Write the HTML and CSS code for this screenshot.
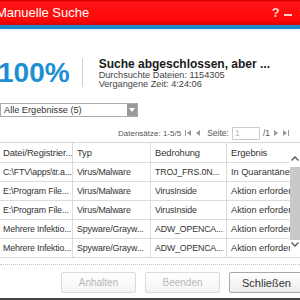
FILE: index.html
```html
<!DOCTYPE html>
<html lang="de">
<head>
    <meta charset="UTF-8">
    <title>Manuelle Suche</title>
    <link rel="stylesheet" href="styles.css">
</head>
<body>
    <div class="window">
        <div class="titlebar">
            <span class="title">Manuelle Suche</span>
            <span class="controls">
                <span class="help">?</span>
                <span class="minimize"></span>
                <span class="close">×</span>
            </span>
        </div>
        <div class="stripe"></div>

        <div class="summary">
            <div class="percent">100%</div>
            <div class="divider"></div>
            <div class="status">
                <div class="headline">Suche abgeschlossen, aber ...</div>
                <div class="info">Durchsuchte Dateien: 1154305</div>
                <div class="info">Vergangene Zeit: 4:24:06</div>
            </div>
        </div>

        <div class="select">
            <span class="select-text">Alle Ergebnisse (5)</span>
            <span class="select-arrow">
                <svg width="6" height="4" viewBox="0 0 6 4"><path d="M0 0h6L3 4z" fill="#fff"/></svg>
            </span>
        </div>

        <div class="pager">
            <span class="count">Datensätze: 1-5/5</span>
            <svg class="nav" width="6" height="6" viewBox="0 0 6 6"><path d="M0 0h1v6H0zM6 0v6L2 3z" fill="#999"/></svg>
            <svg class="nav" width="4" height="6" viewBox="0 0 4 6"><path d="M4 0v6L0 3z" fill="#999"/></svg>
            <span class="page-label">Seite:</span>
            <span class="page-input">1</span>
            <span>/1</span>
            <svg class="nav" width="4" height="6" viewBox="0 0 4 6"><path d="M0 0v6l4-3z" fill="#999"/></svg>
            <svg class="nav" width="6" height="6" viewBox="0 0 6 6"><path d="M0 0v6l4-3zM5 0h1v6H5z" fill="#999"/></svg>
        </div>

        <div class="results">
            <table class="grid">
                <colgroup>
                    <col class="c1"><col class="c2"><col class="c3"><col class="c4">
                </colgroup>
                <thead>
                    <tr>
                        <th>Datei/Registrier...</th>
                        <th>Typ</th>
                        <th>Bedrohung</th>
                        <th>Ergebnis</th>
                    </tr>
                </thead>
                <tbody>
                    <tr>
                        <td>C:\FTV\apps\tr.a...</td>
                        <td>Virus/Malware</td>
                        <td>TROJ_FRS.0N...</td>
                        <td>In Quarantäne</td>
                    </tr>
                    <tr>
                        <td>E:\Program File...</td>
                        <td>Virus/Malware</td>
                        <td>VirusInside</td>
                        <td>Aktion erforderlich</td>
                    </tr>
                    <tr>
                        <td>E:\Program File...</td>
                        <td>Virus/Malware</td>
                        <td>VirusInside</td>
                        <td>Aktion erforderlich</td>
                    </tr>
                    <tr>
                        <td>Mehrere Infektio...</td>
                        <td>Spyware/Grayw...</td>
                        <td>ADW_OPENCA...</td>
                        <td>Aktion erforderlich</td>
                    </tr>
                    <tr>
                        <td>Mehrere Infektio...</td>
                        <td>Spyware/Grayw...</td>
                        <td>ADW_OPENCA...</td>
                        <td>Aktion erforderlich</td>
                    </tr>
                </tbody>
            </table>
            <div class="scrollbar">
                <svg class="arrow-up" width="8" height="5" viewBox="0 0 8 5"><path d="M0.5 4.5L4 1l3.5 3.5" fill="none" stroke="#555" stroke-width="1.4"/></svg>
                <div class="thumb"></div>
                <svg class="arrow-down" width="8" height="5" viewBox="0 0 8 5"><path d="M0.5 0.5L4 4l3.5-3.5" fill="none" stroke="#555" stroke-width="1.4"/></svg>
            </div>
        </div>

        <div class="separator"></div>

        <div class="buttons">
            <button class="btn" disabled>Anhalten</button>
            <button class="btn" disabled>Beenden</button>
            <button class="btn primary">Schließen</button>
        </div>
    </div>
</body>
</html>
```

FILE: styles.css
```css
* {
    box-sizing: border-box;
}

body {
    margin: 0;
    font-family: "Liberation Sans", Arial, sans-serif;
    color: #333;
    background: #fff;
    overflow: hidden;
}

.window {
    width: 300px;
    height: 300px;
    display: flex;
    flex-direction: column;
    background: #fff;
    border-bottom: 2px solid #444;
    overflow: hidden;
}

.titlebar {
    height: 25px;
    flex: none;
    display: flex;
    align-items: center;
    justify-content: space-between;
    background: linear-gradient(#c80000 0, #ff1414 2px, #ff0808 20px, #dc0000 25px);
    color: #fff;
}

.title {
    font-size: 13px;
    margin-left: -4px;
}

.controls {
    display: flex;
    align-items: center;
    margin-right: -8px;
}

.help {
    font-size: 13px;
    font-weight: bold;
    color: #ffd0d0;
    margin-right: 4px;
}

.minimize {
    width: 8px;
    height: 2px;
    margin-top: 5px;
    margin-right: 7px;
    background: #ffd0d0;
}

.close {
    font-size: 16px;
    color: #ffd0d0;
}

.stripe {
    height: 4px;
    flex: none;
    background: #1b8bc9;
    box-shadow: 0 2px 3px #e6f2fa;
}

.summary {
    display: flex;
    align-items: flex-start;
    margin-top: 29px;
}

.percent {
    margin-left: -2px;
    font-size: 28px;
    line-height: 29px;
    font-weight: bold;
    color: #1c8fd3;
}

.divider {
    width: 1px;
    height: 29px;
    margin-left: 12px;
    background: #d0d0d0;
}

.status {
    margin-left: 16px;
}

.headline {
    font-size: 12px;
    line-height: 12px;
    font-weight: bold;
    color: #1a1a1a;
    margin-bottom: 1px;
}

.info {
    font-size: 9.2px;
    line-height: 9px;
    color: #444;
}

.select {
    width: 138px;
    height: 14px;
    margin-top: 14px;
    display: flex;
    border: 1px solid #aaa;
    font-size: 9.2px;
}

.select-text {
    flex: 1;
    padding-left: 3px;
    line-height: 12px;
    color: #333;
}

.select-arrow {
    width: 10px;
    display: flex;
    align-items: center;
    justify-content: center;
    background: #9a9a9a;
}

.pager {
    height: 14px;
    margin-top: 9px;
    padding-right: 10px;
    display: flex;
    align-items: center;
    justify-content: flex-end;
    gap: 3px;
    font-size: 8.5px;
    color: #555;
}

.count {
    font-size: 8px;
}

.nav {
    margin: 0 1px;
}

.page-label {
    margin-left: 3px;
}

.page-input {
    width: 28px;
    height: 13px;
    padding-left: 2px;
    line-height: 11px;
    border: 1px solid #ccc;
    color: #bbb;
}

.results {
    display: flex;
    margin-top: 2px;
}

.grid {
    width: 290px;
    table-layout: fixed;
    border-collapse: separate;
    border-spacing: 0;
    border-top: 1px solid #d6d6d6;
}

.c1 { width: 73px; }
.c2 { width: 78px; }
.c3 { width: 76px; }
.c4 { width: 63px; }

.grid th,
.grid td {
    padding: 0 2px 0 4px;
    text-align: left;
    white-space: nowrap;
    overflow: hidden;
    border-right: 1px solid #dcdcdc;
    border-bottom: 1px solid #dcdcdc;
}

.grid th:first-child,
.grid td:first-child {
    padding-left: 3px;
}

.grid th:last-child,
.grid td:last-child {
    border-right: none;
    padding-right: 0;
}

.grid th {
    font-size: 9.4px;
    font-weight: normal;
    line-height: 19px;
    letter-spacing: -0.1px;
    color: #333;
}

.grid td {
    font-size: 8.8px;
    line-height: 18px;
    letter-spacing: -0.15px;
    color: #333;
}

.grid td:last-child {
    font-size: 9.2px;
    letter-spacing: 0;
}

.scrollbar {
    width: 10px;
    display: flex;
    flex-direction: column;
    align-items: center;
    border-top: 1px solid #d6d6d6;
    border-bottom: 1px solid #dcdcdc;
}

.arrow-up {
    margin-top: 13px;
    margin-bottom: 6px;
}

.thumb {
    width: 10px;
    height: 73px;
    background: #c9c9c9;
}

.arrow-down {
    margin-top: 2px;
}

.separator {
    margin-top: 6px;
    border-top: 1px dotted #c4c4c4;
}

.buttons {
    display: flex;
    justify-content: flex-end;
    gap: 9px;
    margin-top: 7px;
    margin-right: -4px;
}

.btn {
    width: 75px;
    height: 21px;
    padding: 0;
    font-family: "Liberation Sans", Arial, sans-serif;
    font-size: 10px;
    color: #333;
    border: 1px solid #a8a8a8;
    border-radius: 2px;
    background: linear-gradient(#ffffff, #ececec);
}

.btn:disabled {
    color: #b8b8b8;
    border-color: #dadada;
    background: linear-gradient(#ffffff, #f4f4f4);
}

.primary {
    font-size: 11px;
}
```
